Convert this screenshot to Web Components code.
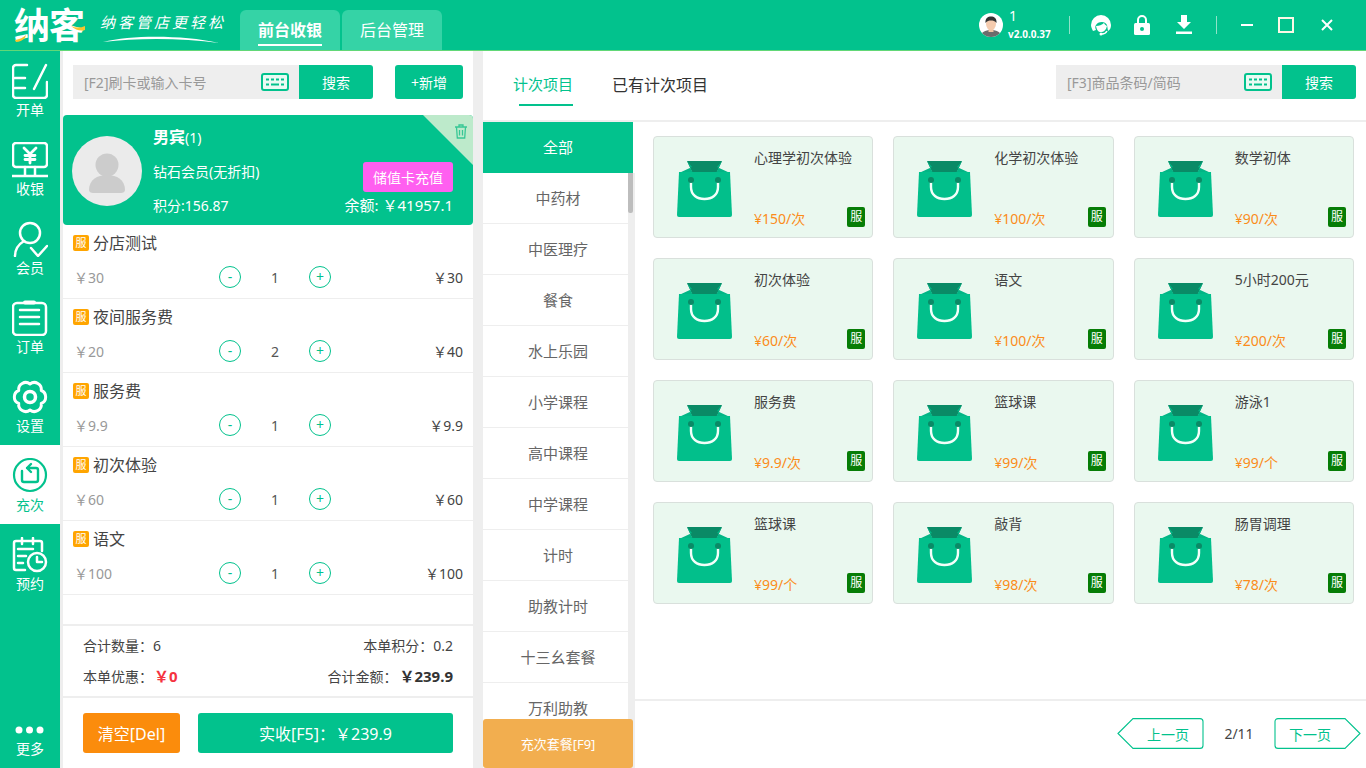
<!doctype html>
<html lang="zh">
<head>
<meta charset="utf-8">
<title>纳客</title>
<style>
  html,body{margin:0;height:100%;overflow:hidden;background:#eee;}
  body{font-family:"Noto Sans","Noto Sans CJK SC",sans-serif;color:#333;}
</style>
</head>
<body>
<nk-app></nk-app>
<script>
const GREEN = '#02c28d';

const KEYBOARD = `<svg width="28" height="18" viewBox="0 0 28 18"><rect x="1" y="1" width="26" height="16" rx="2" fill="#eafaf3" stroke="${GREEN}" stroke-width="2"/><path d="M5 6.500h3M10 6.500h3M15 6.500h3M20 6.500h3M5 11.500h3M10 11.500h8M20 11.500h3" stroke="${GREEN}" stroke-width="2"/></svg>`;

const NAV_ICONS = {
  open: `<path d="M15 2H4a3 3 0 0 0-3 3v27a3 3 0 0 0 3 3h28a3 3 0 0 0 3-3V19M3 15h10M3 25h10M34 2 22 26"/>`,
  cash: `<rect x="1" y="1" width="34" height="24" rx="3"/><path d="M13 25v9M23 25v9M0 34h36"/><path d="M12 6l6 6 6-6M18 12v9M13 13.500h10M13 17.500h10" stroke-width="2.800"/>`,
  member: `<circle cx="18" cy="12" r="10"/><path d="M3 35c0-7 4-12 9-15M19 27l7 8 9-10"/>`,
  order: `<rect x="1" y="3" width="33" height="32" rx="4"/><path d="M8 10h19M8 17h19M8 24h19"/><path d="M13 2.500h9" stroke-width="4"/>`,
  gear: `<path d="M18 5A7 7 0 0 0 6.740 11.500 7 7 0 0 0 6.740 24.500 7 7 0 0 0 18 31 7 7 0 0 0 29.260 24.500 7 7 0 0 0 29.260 11.500 7 7 0 0 0 18 5Z" stroke-width="3"/><circle cx="18" cy="18" r="5.500" stroke-width="3.500"/>`,
  recharge: `<circle cx="18" cy="17" r="16" stroke-width="2.200"/><path d="M15 10h9a2 2 0 0 1 2 2v10a2 2 0 0 1-2 2H12a2 2 0 0 1-2-2v-9M19 6l-4 4 4 4" stroke-width="2.400"/>`,
  book: `<path d="M13 33H4a2 2 0 0 1-2-2V6a2 2 0 0 1 2-2h24a2 2 0 0 1 2 2v8M10 1v6M21 1v6M6 12h15M6 19h8M6 26h5"/><circle cx="25" cy="25" r="9" fill="${GREEN}"/><path d="M25 20v5h5"/>`
};

class NkApp extends HTMLElement {
  constructor(){
    super();
    this.attachShadow({mode:'open'}).innerHTML = `
      <style>
        :host{display:flex;flex-direction:column;width:1366px;height:768px;background:#eee;}
        .body{flex:1;display:flex;min-height:0;}
        nk-catalog{margin-left:10px;}
      </style>
      <nk-header></nk-header>
      <div class="body">
        <nk-sidebar></nk-sidebar>
        <nk-order></nk-order>
        <nk-catalog></nk-catalog>
      </div>`;
  }
}

class NkHeader extends HTMLElement {
  constructor(){
    super();
    this.attachShadow({mode:'open'}).innerHTML = `
      <style>
        :host{display:flex;align-items:flex-end;height:50px;background:${GREEN};box-shadow:0 1px 0 #62d877;position:relative;z-index:2;color:#fff;}
        .logo{width:240px;height:50px;flex:none;position:relative;overflow:hidden;}
        .brand{position:absolute;left:14px;top:6px;font-size:36px;line-height:40px;font-weight:700;letter-spacing:-1px;}
        .accent{position:absolute;left:14px;top:22px;}
        .slogan{position:absolute;left:100px;top:12px;font-size:15px;line-height:20px;letter-spacing:3px;font-style:italic;white-space:nowrap;}
        .swoosh{position:absolute;left:102px;top:35px;}
        .tab{width:100px;height:40px;margin-right:2px;border-radius:6px 6px 0 0;background:#35d3a6;display:flex;justify-content:center;align-items:center;font-size:16px;}
        .tab span{line-height:26px;}
        .tab.on span{font-weight:700;border-bottom:2px solid #fff;margin-top:3px;padding:0 0 1px;}
        .right{margin-left:auto;height:50px;display:flex;align-items:center;}
        .who{width:24px;height:24px;margin-right:6px;}
        .user{width:60px;font-size:14px;line-height:14px;margin-top:-1px;}
        .user small{display:block;font-size:10px;font-weight:700;margin:4px 0 0 -1px;}
        .sep{width:1px;height:18px;background:#8fe3c9;}
        .ic{display:flex;justify-content:center;align-items:center;}
      </style>
      <div class="logo">
        <div class="brand">纳客</div>
        <svg class="accent" width="72" height="22" viewBox="0 0 72 22"><path d="M1 18Q8 17 12 13L11 16Q7 20 2 20ZM57 4Q64 7 71 4V8Q64 10 57 4Z" fill="#f7c52d"/></svg>
        <div class="slogan">纳客管店更轻松</div>
        <svg class="swoosh" width="118" height="10" viewBox="0 0 118 10"><path d="M1 7C30 0 80 0 117 8 80 3 35 3 1 7Z" fill="#fff"/></svg>
      </div>
      <div class="tab on"><span>前台收银</span></div>
      <div class="tab"><span>后台管理</span></div>
      <div class="right">
        <svg class="who" viewBox="0 0 24 24"><defs><clipPath id="c"><circle cx="12" cy="12" r="12"/></clipPath></defs><g clip-path="url(#c)"><rect width="24" height="24" fill="#fff"/><path d="M2 24c0-5 4-7 10-7s10 2 10 7Z" fill="#6c6c6c"/><rect x="9.500" y="14" width="5" height="5" fill="#f2c6a5"/><ellipse cx="12" cy="11" rx="5" ry="6" fill="#f5cbae"/><path d="M6.500 10C6 5 9 3.500 12 3.500S18 5 17.500 10C16 8 14 7.500 12 7.500S8 8 6.500 10Z" fill="#333"/></g></svg>
        <div class="user">1<small>v2.0.0.37</small></div>
        <div class="sep"></div>
        <div class="ic" style="width:62px"><svg width="22" height="22" viewBox="0 0 22 22"><path d="M1 11a10 10 0 0 1 20 0c0 3-1 5-3 6l-1-6c-1-2-3-3-5-3-3 0-5 1-6 3-1 1-1 3 0 5l-3 1c-1-2-2-4-2-6Z" fill="#fff"/><path d="M6 12c3 0 6-1 8-3 1 2 2 2 3 3-1 4-3 6-6 6s-4-2-5-6Z" fill="#fff"/><path d="M17 17c-1 2-3 3-5 3" fill="none" stroke="#fff" stroke-width="1.500"/><circle cx="11" cy="20" r="1.500" fill="#fff"/></svg></div>
        <div class="ic" style="width:20px"><svg width="16" height="22" viewBox="0 0 16 22"><path d="M4 10V6a4 4 0 0 1 8 0v4" fill="none" stroke="#fff" stroke-width="2"/><rect y="9" width="16" height="12" rx="1.500" fill="#fff"/><circle cx="8" cy="15" r="2" fill="${GREEN}"/></svg></div>
        <div class="ic" style="width:64px"><svg width="16" height="20" viewBox="0 0 16 20"><path d="M5 0h6v7h4l-7 7-7-7h4Z" fill="#fff"/><rect y="16.500" width="16" height="2.500" fill="#fff"/></svg></div>
        <div class="sep"></div>
        <div class="ic" style="width:57px;margin-left:1px"><svg width="12" height="2" viewBox="0 0 12 2"><rect width="12" height="2" fill="#fff"/></svg></div>
        <div class="ic" style="width:22px"><svg width="16" height="16" viewBox="0 0 16 16"><rect x="1" y="1" width="14" height="14" fill="none" stroke="#fbf8e6" stroke-width="2"/></svg></div>
        <div class="ic" style="width:60px"><svg width="12" height="12" viewBox="0 0 12 12"><path d="M1 1l10 10M11 1 1 11" stroke="#fff" stroke-width="2"/></svg></div>
        <div style="width:9px"></div>
      </div>`;
  }
}

class NkSidebar extends HTMLElement {
  constructor(){
    super();
    this.attachShadow({mode:'open'}).innerHTML = `
      <style>
        :host{display:flex;flex-direction:column;width:60px;margin-right:3px;flex:none;background:${GREEN};}
        .grow{flex:1;}
      </style>
      <nk-nav icon="open">开单</nk-nav>
      <nk-nav icon="cash">收银</nk-nav>
      <nk-nav icon="member">会员</nk-nav>
      <nk-nav icon="order">订单</nk-nav>
      <nk-nav icon="gear">设置</nk-nav>
      <nk-nav icon="recharge" active>充次</nk-nav>
      <nk-nav icon="book">预约</nk-nav>
      <div class="grow"></div>
      <nk-nav dots>更多</nk-nav>`;
  }
}

class NkNav extends HTMLElement {
  connectedCallback(){
    if (this.shadowRoot) return;
    const dots = this.hasAttribute('dots');
    const icon = dots
      ? `<svg width="36" height="8" viewBox="0 0 36 8" fill="#fff"><circle cx="7" cy="4" r="3.500"/><circle cx="17.500" cy="4" r="3.500"/><circle cx="28" cy="4" r="3.500"/></svg>`
      : `<svg width="36" height="36" viewBox="0 0 36 36" fill="none" stroke-width="2.500" stroke-linecap="round" stroke-linejoin="round">${NAV_ICONS[this.getAttribute('icon')]}</svg>`;
    this.attachShadow({mode:'open'}).innerHTML = `
      <style>
        :host{display:flex;flex-direction:column;align-items:center;height:${dots?'42px':'79px'};box-sizing:border-box;padding-top:${dots?'0':'13px'};color:#fff;background:${GREEN};font-size:14px;}
        :host([active]){background:#fff;color:${GREEN};}
        svg{stroke:#fff;display:block;flex:none;}
        :host([active]) svg{stroke:${GREEN};}
        :host([dots]) svg{stroke:none;}
        .t{line-height:16px;margin-top:${dots?'7px':'3px'};}
      </style>
      ${icon}<div class="t"><slot></slot></div>`;
  }
}

class NkSearch extends HTMLElement {
  connectedCallback(){
    if (this.shadowRoot) return;
    this.attachShadow({mode:'open'}).innerHTML = `
      <style>
        :host{display:flex;height:34px;width:300px;flex:none;}
        .in{flex:1;background:#eee;display:flex;align-items:center;justify-content:space-between;padding:0 10px 0 11px;font-size:14px;color:#999;}
        svg{display:block;}
        .btn{width:74px;background:${GREEN};color:#fff;font-size:14px;display:flex;align-items:center;justify-content:center;border-radius:0 3px 3px 0;}
      </style>
      <div class="in"><span>${this.getAttribute('placeholder')}</span>${KEYBOARD}</div>
      <div class="btn">搜索</div>`;
  }
}

class NkOrder extends HTMLElement {
  constructor(){
    super();
    this.attachShadow({mode:'open'}).innerHTML = `
      <style>
        :host{display:flex;flex-direction:column;width:410px;flex:none;background:#fff;}
        .top{display:flex;justify-content:space-between;padding:15px 10px 16px;background:#fff;}
        .add{width:68px;height:34px;background:${GREEN};color:#fff;font-size:14px;display:flex;align-items:center;justify-content:center;border-radius:3px;}
        .rows{flex:1;min-height:0;}
      </style>
      <div class="top"><nk-search placeholder="[F2]刷卡或输入卡号"></nk-search><div class="add">+新增</div></div>
      <nk-member></nk-member>
      <div class="rows">
        <nk-cart-row price="30" qty="1" total="30">分店测试</nk-cart-row>
        <nk-cart-row price="20" qty="2" total="40">夜间服务费</nk-cart-row>
        <nk-cart-row price="9.9" qty="1" total="9.9">服务费</nk-cart-row>
        <nk-cart-row price="60" qty="1" total="60">初次体验</nk-cart-row>
        <nk-cart-row price="100" qty="1" total="100">语文</nk-cart-row>
      </div>
      <nk-summary></nk-summary>`;
  }
}

class NkMember extends HTMLElement {
  constructor(){
    super();
    this.attachShadow({mode:'open'}).innerHTML = `
      <style>
        :host{display:flex;height:110px;background:${GREEN};border-radius:4px;color:#fff;position:relative;overflow:hidden;flex:none;padding:0 20px 0 9px;box-sizing:border-box;}
        .avatar{width:70px;height:70px;margin-top:21px;border-radius:50%;background:#ebebeb;flex:none;}
        .info{margin-left:11px;flex:1;}
        .name{font-size:16px;font-weight:700;line-height:20px;margin-top:12px;}
        .name span{font-weight:400;font-size:14px;}
        .level{font-size:14px;line-height:18px;margin-top:15px;}
        .bottom{display:flex;justify-content:space-between;align-items:baseline;font-size:14px;line-height:20px;margin-top:14px;}
        .bottom span+span{font-size:15px;}
        .pay{position:absolute;right:20px;top:47px;width:90px;height:30px;background:#ff5ff0;border-radius:3px;font-size:14px;display:flex;align-items:center;justify-content:center;}
        .corner{position:absolute;right:0;top:0;width:0;height:0;border-top:50px solid #bdeacb;border-left:50px solid transparent;}
        .trash{position:absolute;right:6px;top:9px;}
      </style>
      <svg class="avatar" viewBox="0 0 70 70"><circle cx="35" cy="29" r="11.500" fill="#ccc"/><path d="M17 54c0-10 8-15 18-15s18 5 18 15c0 2-2 3-4 3H21c-2 0-4-1-4-3Z" fill="#ccc"/></svg>
      <div class="info">
        <div class="name">男宾<span>(1)</span></div>
        <div class="level">钻石会员(无折扣)</div>
        <div class="bottom"><span>积分:156.87</span><span>余额: ￥41957.1</span></div>
      </div>
      <div class="pay">储值卡充值</div>
      <div class="corner"></div>
      <svg class="trash" width="12" height="15" viewBox="0 0 12 15" fill="none" stroke="#37c795" stroke-width="1.300"><path d="M0 3h12M4 3V1h4v2M1.500 3l.8 11h7.400l.8-11M4.500 6v5.500M7.500 6v5.500"/></svg>`;
  }
}

class NkCartRow extends HTMLElement {
  connectedCallback(){
    if (this.shadowRoot) return;
    const g = n => this.getAttribute(n);
    this.attachShadow({mode:'open'}).innerHTML = `
      <style>
        :host{display:block;height:74px;box-sizing:border-box;border-bottom:1px solid #eee;padding:9px 10px 0;}
        .title{display:flex;align-items:center;height:18px;font-size:16px;color:#444;}
        .tx{margin-top:-2px;}
        .badge{width:16px;height:16px;background:#ffa500;border-radius:2px;color:#fff;font-size:11px;line-height:16px;text-align:center;margin-right:4px;}
        .line{display:grid;grid-template-columns:146px 22px 68px 22px 1fr;align-items:center;height:24px;margin-top:13px;font-size:14px;}
        .price{color:#999;padding-left:1px;}
        .b{width:22px;height:22px;box-sizing:border-box;border:1px solid ${GREEN};border-radius:50%;color:${GREEN};display:flex;align-items:center;justify-content:center;line-height:1;font-size:14px;}
        .q{text-align:center;color:#555;}
        .total{text-align:right;color:#444;}
      </style>
      <div class="title"><span class="badge">服</span><span class="tx"><slot></slot></span></div>
      <div class="line">
        <span class="price">￥${g('price')}</span><span class="b">-</span><span class="q">${g('qty')}</span><span class="b">+</span><span class="total">￥${g('total')}</span>
      </div>`;
  }
}

class NkSummary extends HTMLElement {
  constructor(){
    super();
    this.attachShadow({mode:'open'}).innerHTML = `
      <style>
        :host{display:block;flex:none;background:#fff;}
        .sum{box-sizing:border-box;border-top:2px solid #eee;border-bottom:2px solid #eee;height:74px;padding:4px 20px 0;display:grid;grid-template-columns:1fr 1fr;grid-auto-rows:30px;align-items:center;font-size:14px;color:#444;}
        .r{text-align:right;}
        .red{color:#f5333f;font-weight:700;font-size:15px;margin-left:1px;}
        .bold{color:#333;font-weight:700;font-size:15px;margin-left:2px;}
        .btns{display:flex;gap:18px;padding:15px 20px;height:40px;}
        .btns div{display:flex;align-items:center;justify-content:center;border-radius:3px;color:#fff;font-size:16px;}
        .clear{width:97px;background:#fb8c0c;}
        .pay{flex:1;background:${GREEN};}
      </style>
      <div class="sum">
        <div>合计数量：6</div><div class="r">本单积分：0.2</div>
        <div>本单优惠：<span class="red">￥0</span></div><div class="r">合计金额：<span class="bold">￥239.9</span></div>
      </div>
      <div class="btns"><div class="clear">清空[Del]</div><div class="pay">实收[F5]：￥239.9</div></div>`;
  }
}

class NkCatalog extends HTMLElement {
  constructor(){
    super();
    this.attachShadow({mode:'open'}).innerHTML = `
      <style>
        :host{flex:1;min-width:0;display:flex;flex-direction:column;background:#fff;}
        .head{height:72px;flex:none;box-sizing:border-box;border-bottom:2px solid #eee;display:flex;padding:15px 10px 0 30px;font-size:15px;}
        .tab{height:40px;line-height:38px;margin-right:39px;color:#333;position:relative;}
        .tab+.tab{font-size:16px;line-height:41px;}
        .tab.on{color:${GREEN};}
        .tab.on::after{content:"";position:absolute;left:6px;right:0;bottom:-1px;height:2px;background:${GREEN};}
        nk-search{margin-left:auto;}
        .main{flex:1;min-height:0;display:flex;}
        .right{flex:1;display:flex;flex-direction:column;min-width:0;}
        .grid{flex:1;display:grid;grid-template-columns:repeat(3,1fr);grid-auto-rows:102px;gap:20px;padding:14px 12px 0 18px;align-content:start;}
      </style>
      <div class="head">
        <div class="tab on">计次项目</div><div class="tab">已有计次项目</div>
        <nk-search placeholder="[F3]商品条码/简码"></nk-search>
      </div>
      <div class="main">
        <nk-categories></nk-categories>
        <div class="right">
          <div class="grid">
            <nk-product price="¥150/次">心理学初次体验</nk-product>
            <nk-product price="¥100/次">化学初次体验</nk-product>
            <nk-product price="¥90/次">数学初体</nk-product>
            <nk-product price="¥60/次">初次体验</nk-product>
            <nk-product price="¥100/次">语文</nk-product>
            <nk-product price="¥200/次">5小时200元</nk-product>
            <nk-product price="¥9.9/次">服务费</nk-product>
            <nk-product price="¥99/次">篮球课</nk-product>
            <nk-product price="¥99/个">游泳1</nk-product>
            <nk-product price="¥99/个">篮球课</nk-product>
            <nk-product price="¥98/次">敲背</nk-product>
            <nk-product price="¥78/次">肠胃调理</nk-product>
          </div>
          <nk-pager></nk-pager>
        </div>
      </div>`;
  }
}

class NkCategories extends HTMLElement {
  constructor(){
    super();
    const names = ['中药材','中医理疗','餐食','水上乐园','小学课程','高中课程','中学课程','计时','助教计时','十三幺套餐','万利助教'];
    this.attachShadow({mode:'open'}).innerHTML = `
      <style>
        :host{display:block;width:152px;flex:none;position:relative;overflow:hidden;background:#fff;}
        .all{width:150px;height:51px;box-sizing:border-box;padding-bottom:2px;background:${GREEN};color:#fff;font-size:15px;display:flex;align-items:center;justify-content:center;}
        .wrap{display:flex;height:595px;overflow:hidden;}
        .list{flex:1;min-width:0;}
        .it{height:51px;box-sizing:border-box;border-bottom:1px solid #eee;padding:0 0 1px 5px;font-size:15px;color:#666;display:flex;align-items:center;justify-content:center;}
        .track{width:7px;flex:none;background:#eee;}
        .thumb{width:5px;height:40px;background:#bdbdbd;border-radius:0 0 2px 2px;}
        .pkg{position:absolute;left:0;bottom:0;width:150px;height:49px;background:#f2ae4f;color:#fff;font-size:13px;border-radius:3px;display:flex;align-items:center;justify-content:center;}
      </style>
      <div class="all">全部</div>
      <div class="wrap">
        <div class="list">${names.map(n=>`<div class="it">${n}</div>`).join('')}</div>
        <div class="track"><div class="thumb"></div></div>
      </div>
      <div class="pkg">充次套餐[F9]</div>`;
  }
}

class NkProduct extends HTMLElement {
  connectedCallback(){
    if (this.shadowRoot) return;
    this.attachShadow({mode:'open'}).innerHTML = `
      <style>
        :host{display:block;position:relative;background:#eaf8ef;border:1px solid #d9e0dc;border-radius:4px;box-sizing:border-box;height:102px;}
        .bag{position:absolute;left:23px;top:23px;}
        .name{position:absolute;left:100px;top:11px;font-size:14px;line-height:20px;color:#444;white-space:nowrap;}
        .price{position:absolute;left:100px;bottom:8px;font-size:14px;line-height:20px;color:#fb8c1a;}
        .tag{position:absolute;right:7px;bottom:10px;width:18px;height:20px;background:#067d06;border-radius:2px;color:#fff;font-size:12px;line-height:20px;text-align:center;}
      </style>
      <svg class="bag" width="55" height="58" viewBox="0 0 55 58">
        <path d="M10 1H45L40 12H15Z" fill="#0a8a66"/>
        <path d="M10 1 15 7 2 13H16ZM45 1 40 7 53 13H39Z" fill="#02b585"/>
        <path d="M2 12H53L55 55a2 2 0 0 1-2 2H2a2 2 0 0 1-2-2Z" fill="#02bf8b"/>
        <path d="M14 20V27C14 35 20 39 27.500 39S41 35 41 27V20" fill="none" stroke="#f3fffa" stroke-width="2.400"/>
        <circle cx="14" cy="20" r="3" fill="#0a8a66"/><circle cx="41" cy="20" r="3" fill="#0a8a66"/>
      </svg>
      <div class="name"><slot></slot></div>
      <div class="price">${this.getAttribute('price')}</div>
      <div class="tag">服</div>`;
  }
}

class NkPager extends HTMLElement {
  constructor(){
    super();
    const shape = (d) => `<svg width="87" height="31" viewBox="0 0 87 31"><path d="${d}" fill="#fff" stroke="${GREEN}" stroke-width="1.100"/></svg>`;
    this.attachShadow({mode:'open'}).innerHTML = `
      <style>
        :host{display:flex;flex:none;height:69px;box-sizing:border-box;border-top:2px solid #eee;align-items:flex-start;justify-content:flex-end;padding:17px 5px 0 0;}
        .p{display:grid;width:87px;height:31px;color:${GREEN};font-size:14px;line-height:34px;}
        .p>*{grid-area:1/1;}
        .p span{padding-left:30px;}
        .p.n span{padding-left:15px;}
        .c{width:70px;text-align:center;font-size:14px;line-height:31px;color:#444;}
      </style>
      <div class="p">${shape('M1 15.500 16 .6H83a3 3 0 0 1 3 3V27.400a3 3 0 0 1-3 3H16Z')}<span>上一页</span></div>
      <div class="c">2/11</div>
      <div class="p n">${shape('M86 15.500 71 .6H4a3 3 0 0 0-3 3V27.400a3 3 0 0 0 3 3H71Z')}<span>下一页</span></div>`;
  }
}

customElements.define('nk-app', NkApp);
customElements.define('nk-header', NkHeader);
customElements.define('nk-sidebar', NkSidebar);
customElements.define('nk-nav', NkNav);
customElements.define('nk-search', NkSearch);
customElements.define('nk-order', NkOrder);
customElements.define('nk-member', NkMember);
customElements.define('nk-cart-row', NkCartRow);
customElements.define('nk-summary', NkSummary);
customElements.define('nk-catalog', NkCatalog);
customElements.define('nk-categories', NkCategories);
customElements.define('nk-product', NkProduct);
customElements.define('nk-pager', NkPager);
</script>
</body>
</html>
